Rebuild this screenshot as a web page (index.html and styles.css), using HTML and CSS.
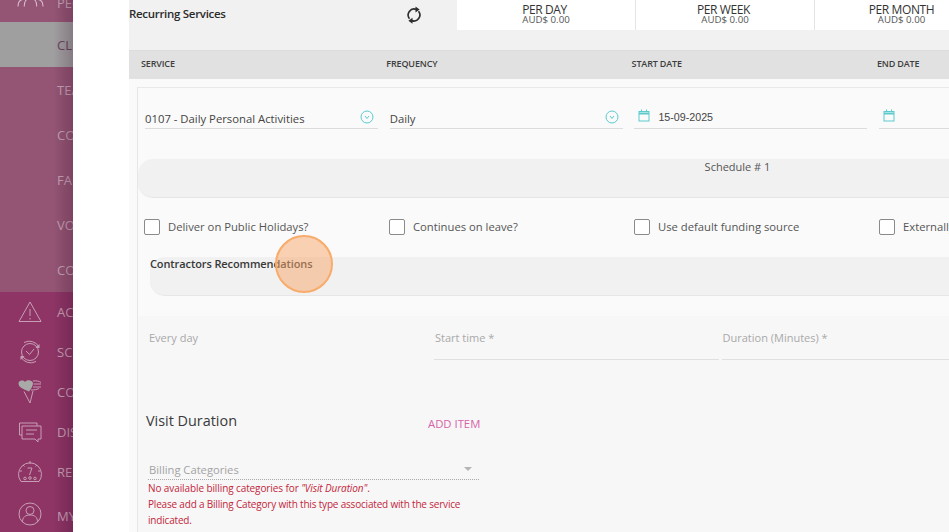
FILE: index.html
```html
<!DOCTYPE html>
<html lang="en">
<head>
<meta charset="utf-8">
<title>Recurring Services</title>
<link rel="stylesheet" href="styles.css">
</head>
<body>
<div class="page">
  <nav class="sidebar">
    <div class="group-upper">
      <div class="nav-row first"><svg class="nav-icon people" viewBox="0 0 26 24"><circle cx="7" cy="4" r="3"/><circle cx="19" cy="4" r="3"/><circle cx="13" cy="3" r="3"/><path d="M1 14c0-5 3-7 6-7M25 14c0-5-3-7-6-7M7 14c0-5 2-8 6-8s6 3 6 8"/></svg><span class="nav-label">PEOPLE</span></div>
      <div class="nav-row selected"><span class="nav-label">CLIENTS</span></div>
      <div class="nav-row"><span class="nav-label">TEAMS</span></div>
      <div class="nav-row"><span class="nav-label">CONTRACTORS</span></div>
      <div class="nav-row"><span class="nav-label">FAMILY</span></div>
      <div class="nav-row"><span class="nav-label">VOLUNTEERS</span></div>
      <div class="nav-row"><span class="nav-label">CONTACTS</span></div>
    </div>
    <div class="group-lower">
      <div class="nav-row short">
        <svg class="nav-icon" viewBox="0 0 24 24"><path d="M12 2 23 21.500H1Z"/><path d="M12 9v7M12 18v1.500"/></svg>
        <span class="nav-label">ACTIONS</span>
      </div>
      <div class="nav-row short">
        <svg class="nav-icon" viewBox="0 0 24 24"><path d="M21 7A11 11 0 0 0 6 2.500M3 17a11 11 0 0 0 15 4.500"/><circle cx="12" cy="12" r="8.500"/><path d="M8 11l3.500 3.500L16 9"/><path class="solid" d="M21.500 4v4h-4ZM2.500 20v-4h4Z"/></svg>
        <span class="nav-label">SCHEDULE</span>
      </div>
      <div class="nav-row short">
        <svg class="nav-icon" viewBox="0 0 24 24"><path class="grey" d="M11 11.500C5 9 .5 7 .5 3.500.5 .5 5-.5 7 2c1.500-2.500 7-2.500 8 1 0 3-2 6-4 8.500Z"/><path d="M15 1c3-.5 6 0 8 1.500M15.500 4h7.500M15 7h8M13 10c3 0 6-.5 8-1.500M6 11.500l6 11.500 3-12"/></svg>
        <span class="nav-label">COMPLIANCE</span>
      </div>
      <div class="nav-row short">
        <svg class="nav-icon" viewBox="0 0 24 24"><path d="M4 15H1.500V3H19v3"/><path d="M4 6h19v13h-3v3l-3-3H4Z"/><path d="M8 10h11M8 14h8"/></svg>
        <span class="nav-label">DISCUSSIONS</span>
      </div>
      <div class="nav-row short">
        <svg class="nav-icon" viewBox="0 0 24 24"><path d="M3 21.500A11.500 11.500 0 1 1 21 21.500Z"/><path d="M12 1v3M2 11h2M20 11h2M5 5l1.500 1.500M19 5l-1.500 1.500M9.500 8H14l-2.500 7"/><circle cx="7" cy="18.500" r="1.300"/><circle cx="17" cy="18.500" r="1.300"/><circle cx="12" cy="18" r="1.300"/></svg>
        <span class="nav-label">REPORTS</span>
      </div>
      <div class="nav-row short last">
        <svg class="nav-icon" viewBox="0 0 24 24"><circle cx="12" cy="12" r="11"/><circle cx="12" cy="8.500" r="4"/><path d="M4.500 20c0-5 3-7 7.500-7s7.500 2 7.500 7"/></svg>
        <span class="nav-label">MY ACCOUNT</span>
      </div>
    </div>
  </nav>

  <div class="gutter"></div>

  <main class="main">
    <header class="summary">
      <div class="summary-title">Recurring Services</div>
      <svg class="sync" viewBox="0 0 24 24"><path d="M15 4.500A8 8 0 0 0 6 17"/><path d="M9 19.500A8 8 0 0 0 18 7"/><path class="sync-head" d="M14 .5l5.500 4-5.500 4ZM10 15.500l-5.500 4 5.500 4Z"/></svg>
      <div class="summary-cells">
        <div class="cell"><div class="cell-head">PER DAY</div><div class="cell-value">AUD$ 0.00</div></div>
        <div class="cell"><div class="cell-head">PER WEEK</div><div class="cell-value">AUD$ 0.00</div></div>
        <div class="cell"><div class="cell-head">PER MONTH</div><div class="cell-value">AUD$ 0.00</div></div>
      </div>
    </header>

    <div class="table-head">
      <span>SERVICE</span><span>FREQUENCY</span><span>START DATE</span><span>END DATE</span>
    </div>

    <section class="card">
      <div class="field-row">
        <div class="field"><span class="field-text">0107 - Daily Personal Activities</span>
          <svg class="teal-icon chevron" viewBox="0 0 14 14"><circle cx="7" cy="7" r="6"/><path d="M5 6l2 2.500L9 6"/></svg></div>
        <div class="field"><span class="field-text">Daily</span>
          <svg class="teal-icon chevron" viewBox="0 0 14 14"><circle cx="7" cy="7" r="6"/><path d="M5 6l2 2.500L9 6"/></svg></div>
        <div class="field date"><svg class="teal-icon calendar" viewBox="0 0 12 13"><rect x="1" y="2.500" width="10" height="9.500"/><path d="M1 4.500h10" class="thick"/><path d="M3.500 .5v2M8.500 .5v2"/></svg><span class="date-text">15-09-2025</span></div>
        <div class="field date"><svg class="teal-icon calendar" viewBox="0 0 12 13"><rect x="1" y="2.500" width="10" height="9.500"/><path d="M1 4.500h10" class="thick"/><path d="M3.500 .5v2M8.500 .5v2"/></svg></div>
      </div>

      <div class="schedule-bar">Schedule # 1</div>

      <div class="check-row">
        <label class="check"><span class="box"></span>Deliver on Public Holidays?</label>
        <label class="check"><span class="box"></span>Continues on leave?</label>
        <label class="check"><span class="box"></span>Use default funding source</label>
        <label class="check"><span class="box"></span>Externally</label>
      </div>

      <div class="recommend-bar">Contractors Recommendations</div>

      <div class="schedule-detail">
        <div class="every">Every day</div>
        <div class="time-field">Start time *</div>
        <div class="time-field">Duration (Minutes) *</div>
      </div>

      <div class="lower">
        <div class="visit-row">
          <h2 class="visit-title">Visit Duration</h2>
          <span class="add-item">ADD ITEM</span>
        </div>
        <div class="billing">
          <div class="billing-select"><span>Billing Categories</span><i class="caret"></i></div>
          <p class="error">No available billing categories for <em>"Visit Duration"</em>.<br><span class="error-hint">Please add a Billing Category with this type associated with the service indicated.</span></p>
        </div>
      </div>
    </section>
  </main>
</div>
<div class="click-marker"></div>
</body>
</html>
```
FILE: styles.css
```css
* { box-sizing: border-box; }
html, body { margin: 0; height: 100%; overflow: hidden; background: #fff; }
body { font-family: "Open Sans", "Liberation Sans", sans-serif; color: #444; }

.page { display: flex; width: 949px; height: 532px; overflow: hidden; }

/* Sidebar */
.sidebar { position: relative; flex: 0 0 73px; height: 532px; overflow: hidden; display: flex; flex-direction: column; }
.sidebar::after { content: ""; position: absolute; top: 0; right: 0; bottom: 0; width: 20px; background: linear-gradient(to right, rgba(40,0,30,0), rgba(40,0,30,.22)); pointer-events: none; }
.group-upper { margin-top: -23px; background: #945574; }
.group-lower { flex: 1; background: #8e3565; }
.nav-row { position: relative; display: flex; align-items: center; height: 45px; padding-left: 57px; white-space: nowrap; overflow: hidden; }
.nav-row.first { padding-top: 6px; }
.nav-row.short { height: 40px; }
.nav-row.last { height: 44px; padding-top: 4px; }
.nav-row.selected { background: #a09fa0; }
.nav-row.selected .nav-label { color: #6b4560; }
.nav-label { font-size: 13px; color: #c6a3b6; }
.group-lower .nav-label { color: #c8a0b6; }
.nav-icon { position: absolute; left: 18px; top: 8px; width: 24px; height: 24px; fill: none; stroke: #c79fb5; stroke-width: 1; }
.nav-icon.people { left: 17px; top: 15px; width: 27px; height: 25px; stroke: #d8bfcc; }
.nav-row.last .nav-icon { top: 10px; }
.nav-icon .solid { fill: #c79fb5; stroke: none; }
.nav-icon .grey { fill: #a9aaa8; stroke: none; }

/* Gutter */
.gutter { flex: 0 0 56px; background: #fff; }

/* Main */
.main { flex: 0 0 820px; height: 532px; overflow: hidden; background: #fafafa; }

.summary { display: flex; height: 50px; background: #f1f1f1; align-items: flex-start; }
.summary-title { width: 276px; flex: none; height: 30px; line-height: 28px; font-size: 11.500px; font-weight: 600; color: #2b2b2b; letter-spacing: -.3px; white-space: nowrap; }
.sync { flex: none; width: 18px; height: 18px; margin-top: 6px; fill: none; stroke: #2d2d2d; stroke-width: 2.200; }
.sync .sync-head { fill: #2d2d2d; stroke: none; }
.summary-cells { display: flex; flex: none; margin-left: 34px; width: 492px; height: 30px; background: #fff; overflow: hidden; }
.cell { flex: 0 0 179px; text-align: center; border-right: 1px solid #e4e4e4; padding-top: 3px; }
.cell:last-child { border-right: 0; flex: 0 0 173px; }
.cell-head { font-size: 12px; line-height: 13px; color: #333; letter-spacing: -.4px; }
.cell:not(:last-child) .cell-head { padding-right: 3px; }
.cell-value { font-size: 9.700px; line-height: 8px; color: #555; }

.table-head { display: grid; grid-template-columns: repeat(4, 245.300px); height: 29px; padding: 0 0 4px 12px; align-items: center; background: #e1e1e1; border-top: 1px solid #dcdcdc; font-size: 9px; font-weight: 600; color: #3e3e3e; letter-spacing: -.15px; }

.card { margin: 8px 0 0 8px; width: 1200px; background: #fafafa; border-top: 1px solid #e9e9e9; border-left: 1px solid #e6e6e6; }

.field-row { display: grid; grid-template-columns: repeat(4, 233px); column-gap: 11.700px; padding: 14px 0 0 7px; height: 41px; box-sizing: content-box; }
.field { display: flex; align-items: flex-end; justify-content: space-between; height: 27px; border-bottom: 1px solid #dcdcdc; }
.field.date { justify-content: flex-start; padding-left: 4px; }
.field-text { font-size: 11.300px; line-height: 18px; color: #444; }
.date-text { font-family: "Liberation Sans", Arial, sans-serif; font-size: 10.700px; line-height: 22px; color: #444; margin-left: 8px; }
.teal-icon { fill: none; stroke: #5ccbce; stroke-width: 1; }
.chevron { width: 14px; height: 14px; margin: 0 4px 4px 0; }
.calendar { width: 12px; height: 13px; margin-bottom: 6px; flex: none; }
.calendar .thick { stroke-width: 2; }

.schedule-bar { height: 39px; margin-top: 16px; text-align: center; font-size: 11px; line-height: 16px; color: #555; background: #f1f1f1; border-bottom: 1px solid #e6e6e6; border-radius: 15px 0 0 15px; }

.check-row { display: grid; grid-template-columns: repeat(4, 245px); padding: 20px 0 0 6px; height: 59px; }
.check { display: flex; align-items: center; gap: 8px; height: 17px; font-size: 11.250px; color: #555; white-space: nowrap; }
.box { flex: none; width: 16px; height: 16px; border: 1px solid #8a8a8a; border-radius: 2px; background: #fff; }

.recommend-bar { height: 39px; margin-left: 12px; font-size: 11px; font-weight: 600; line-height: 14px; color: #383838; background: #f1f1f1; border-bottom: 1px solid #e6e6e6; border-radius: 15px 0 0 15px; letter-spacing: -.1px; }

.schedule-detail { display: grid; grid-template-columns: 286px 287.500px 320px; margin-top: 20px; padding: 13px 0 0 11px; height: 64px; background: #f7f7f7; font-size: 11px; color: #a9a9a9; }
.time-field { height: 31px; line-height: 18px; border-bottom: 1px solid #e0e0e0; margin-right: 4px; margin-left: -1px; padding-left: 1px; }
.every { line-height: 18px; }

.lower { background: #f7f7f7; height: 152px; padding: 25px 0 0 8px; }
.visit-row { display: flex; align-items: flex-end; width: 400px; height: 27px; }
.visit-title { width: 282px; margin: 0; font-size: 14.400px; font-weight: 400; line-height: 22px; color: #3a3a3a; }
.add-item { font-size: 11.300px; line-height: 17px; color: #d763aa; }
.billing { width: 331px; margin: 29px 0 0 2px; }
.billing-select { display: flex; justify-content: space-between; align-items: center; height: 19px; padding: 0 7px 2px 1px; border-bottom: 1px dotted #aaa; font-size: 11.200px; color: #a3a3a3; }
.caret { width: 0; height: 0; border: 4px solid transparent; border-top-color: #b5b5b5; border-bottom: 0; }
.error { margin: 0; width: 322px; font-size: 10px; font-weight: 500; line-height: 16px; color: #c4253b; letter-spacing: -.1px; }
.error-hint { letter-spacing: -.19px; }

/* Click marker lying over the page */
.click-marker { position: absolute; left: 275px; top: 235px; width: 58px; height: 58px; border-radius: 50%; background: rgba(247,165,105,.5); border: 2px solid #f8ac6c; }
```
